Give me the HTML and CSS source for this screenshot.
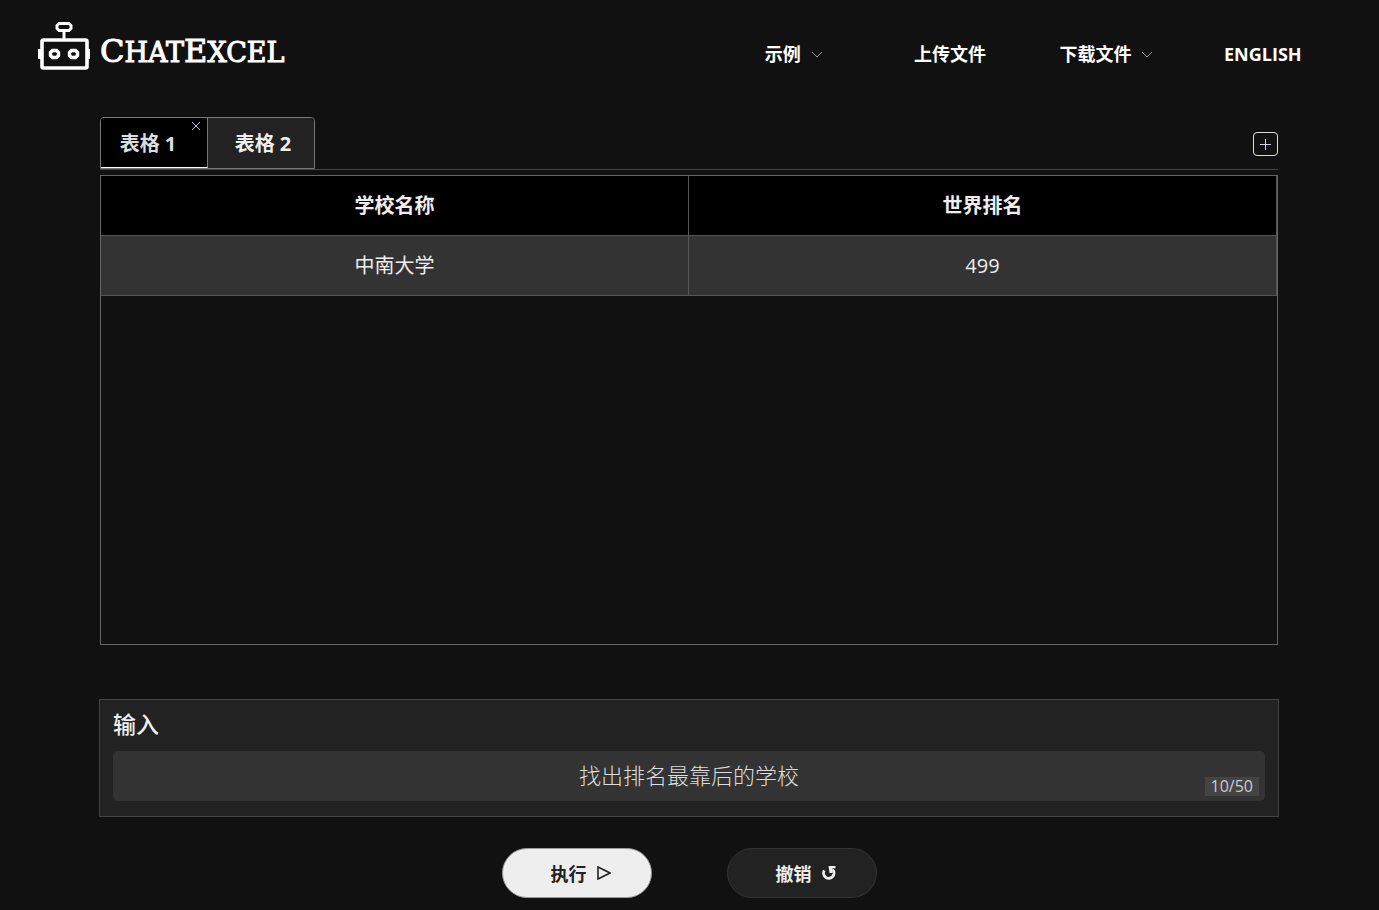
FILE: index.html
```html
<!DOCTYPE html>
<html lang="zh-CN">
<head>
<meta charset="utf-8">
<meta name="viewport" content="width=device-width, initial-scale=1">
<title>ChatExcel</title>
<link rel="stylesheet" href="styles.css">
</head>
<body>
<header class="header">
  <a class="logo" href="#">
    <svg class="logo-icon" width="52" height="48" viewBox="0 0 52 48" fill="none" stroke="#fff" aria-hidden="true">
      <path d="M21 1.500h10l2 2v3l-2 2H21l-2-2v-3z" stroke-width="3"/>
      <path d="M26 10v8" stroke-width="3"/>
      <rect x="4" y="18" width="45" height="28" rx="1.500" stroke-width="3.600"/>
      <path d="M2 27v10M50.500 27v10" stroke-width="4"/>
      <path d="M14.500 28.500h4l2 2v3l-2 2h-4l-2-2v-3zM33.500 28.500h4l2 2v3l-2 2h-4l-2-2v-3z" stroke-width="3.400"/>
    </svg>
    <span class="logo-text"><span class="cap">C</span>HAT<span class="cap">E</span>XCEL</span>
  </a>
  <nav class="nav">
    <button class="nav-item" type="button">示例
      <svg class="chevron" width="12" height="7" viewBox="0 0 12 7" aria-hidden="true"><path d="M1 1l5 5 5-5"/></svg>
    </button>
    <button class="nav-item" type="button">上传文件</button>
    <button class="nav-item" type="button">下载文件
      <svg class="chevron" width="12" height="7" viewBox="0 0 12 7" aria-hidden="true"><path d="M1 1l5 5 5-5"/></svg>
    </button>
    <a class="nav-item" href="#">ENGLISH</a>
  </nav>
</header>

<main class="main">
  <div class="tab-bar">
    <div class="tabs">
      <div class="tab tab-active">
        <button class="tab-name" type="button">表格 1</button>
        <button class="tab-close" type="button" aria-label="关闭">
          <svg width="10" height="10" viewBox="0 0 10 10" aria-hidden="true"><path d="M1 1l8 8M9 1L1 9"/></svg>
        </button>
      </div>
      <div class="tab">
        <button class="tab-name" type="button">表格 2</button>
      </div>
    </div>
    <button class="add" type="button" aria-label="新建表格">
      <svg width="11" height="11" viewBox="0 0 11 11" aria-hidden="true"><path d="M0 5.500h11M5.500 0v11"/></svg>
    </button>
  </div>

  <div class="sheet">
    <table class="table">
      <thead><tr><th scope="col">学校名称</th><th scope="col">世界排名</th></tr></thead>
      <tbody><tr><td>中南大学</td><td>499</td></tr></tbody>
    </table>
  </div>

  <form class="panel">
    <label class="panel-label" for="query">输入</label>
    <div class="field">
      <input class="query" id="query" type="text" maxlength="50" value="找出排名最靠后的学校">
      <span class="count">10/50</span>
    </div>
  </form>

  <div class="actions">
    <button class="action action-run" type="button">执行
      <svg width="14" height="14" viewBox="0 0 14 14" aria-hidden="true"><path d="M1 1l12 6-12 6z" fill="none" stroke="#222" stroke-width="1.600"/></svg>
    </button>
    <button class="action action-undo" type="button">撤销
      <svg class="undo-icon" width="14" height="14" viewBox="0 0 14 14" aria-hidden="true"><path d="M2.300 4.500A5.200 5.200 0 1 0 10.500 3.500" fill="none" stroke="#eee" stroke-width="2.800"/><path d="M6.500 0H13.500V2.300H10.500V7H7.500z" fill="#eee"/></svg>
    </button>
  </div>
</main>
</body>
</html>
```

FILE: styles.css
```css
* { box-sizing: border-box; }

body {
  margin: 0;
  background: #111;
  color: #eee;
  font-family: "Open Sans", "Noto Sans CJK SC", sans-serif;
  font-size: 20px;
}

button {
  margin: 0;
  padding: 0;
  border: 0;
  background: none;
  color: inherit;
  font: inherit;
  cursor: pointer;
}

a { color: inherit; text-decoration: none; }

.header {
  display: flex;
  align-items: center;
  justify-content: space-between;
  height: 108px;
  padding: 0 38px;
}

.logo {
  display: flex;
  align-items: center;
  gap: 10px;
  padding-bottom: 16px;
  color: #fff;
}

.logo-icon { display: block; }

.logo-text {
  padding-top: 12px;
  font-family: "DejaVu Serif", serif;
  font-size: 27px;
  line-height: 36px;
  -webkit-text-stroke: 1px #fff;
}

.cap { font-size: 32px; }

.nav {
  display: grid;
  grid-template-columns: repeat(4, 1fr);
  width: 48%;
  color: #fff;
  font-size: 18px;
  font-weight: 700;
  line-height: 28px;
}

.nav-item {
  display: flex;
  align-items: center;
  justify-content: center;
  gap: 10px;
}

.chevron { fill: none; stroke: #999; }

.main { padding: 9px 101px 12px 100px; }

.tab-bar {
  display: flex;
  align-items: center;
  justify-content: space-between;
  border-bottom: 1px solid #444;
}

.tabs {
  display: flex;
  border: 1px solid #777;
  border-radius: 4px 4px 0 0;
  overflow: hidden;
}

.tab {
  position: relative;
  display: flex;
  width: 106px;
  height: 50px;
  background: #222;
  font-weight: 700;
}

.tab-name { flex: 1; padding: 0 0 2px 4px; }

.tab-active {
  width: 107px;
  border-right: 1px solid #777;
  border-bottom: 1px solid #fff;
  background: #000;
  color: #ddd;
}

.tab-active .tab-name { padding: 0 12px 0 0; }

.tab-close { position: absolute; top: 3px; right: 6px; line-height: 0; }

.tab-close path { stroke: #acd; }

.add {
  display: grid;
  place-items: center;
  width: 25px;
  height: 24px;
  margin-top: 2px;
  border: 1px solid #ddd;
  border-radius: 4px;
}

.add path { stroke: #ccd; }

.sheet {
  height: 470px;
  margin-top: 5px;
  border: 1px solid #666;
}

.table {
  width: 100%;
  border-spacing: 0;
  table-layout: fixed;
  line-height: 28px;
  text-align: center;
}

.table th,
.table td {
  height: 60px;
  padding: 0;
  border-right: 1px solid #555;
  border-bottom: 1px solid #555;
}

.table th { background: #000; }

.table td { background: #333; font-weight: 400; }

.panel {
  margin: 54px -1px 0;
  padding: 7px 13px 15px;
  border: 1px solid #444;
  background: #222;
}

.panel-label {
  display: block;
  margin-bottom: 10px;
  font-size: 23px;
  font-weight: 500;
  line-height: 34px;
}

.field { position: relative; }

.query {
  display: block;
  width: 100%;
  height: 50px;
  padding: 0 12px 5px;
  border: 0;
  border-radius: 5px;
  background: #333;
  color: #ddd;
  font-family: inherit;
  font-size: 22px;
  font-weight: 300;
  text-align: center;
}

.count {
  position: absolute;
  right: 6px;
  bottom: 5px;
  padding: 0 6px;
  background: #444;
  color: #ccc;
  font-size: 16px;
  line-height: 19px;
}

.actions {
  display: flex;
  justify-content: center;
  gap: 75px;
  margin-top: 31px;
}

.action {
  display: flex;
  align-items: center;
  justify-content: center;
  gap: 10px;
  width: 150px;
  height: 50px;
  padding-left: 8px;
  border: 1px solid #333;
  border-radius: 25px;
  background: #222;
  font-size: 18px;
  font-weight: 700;
}

.action-run {
  border-color: #999;
  background: #eee;
  color: #222;
}
```
